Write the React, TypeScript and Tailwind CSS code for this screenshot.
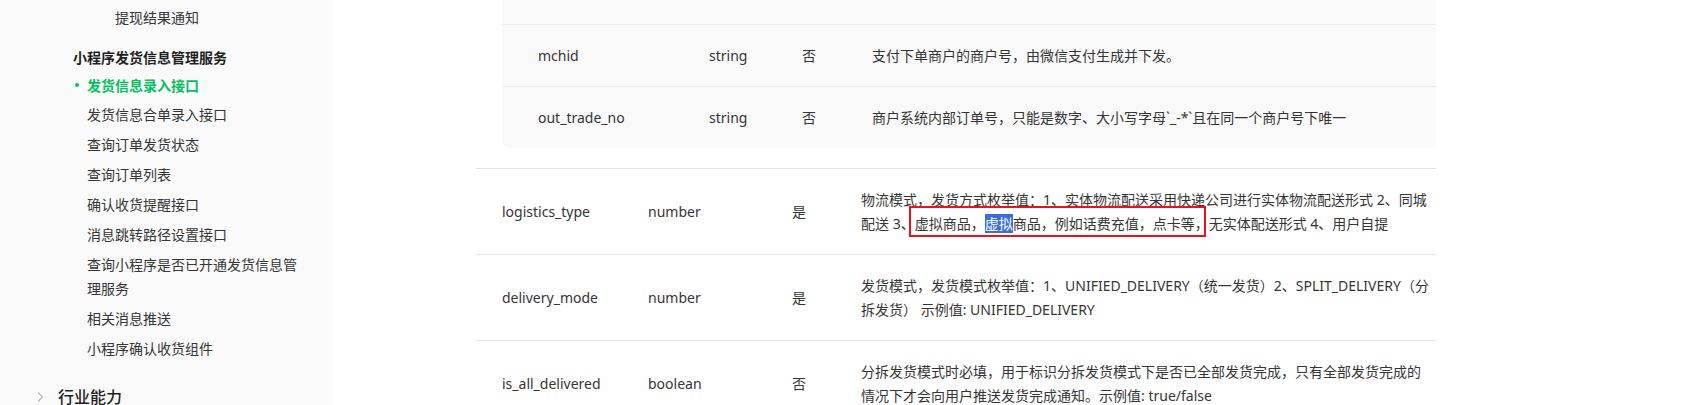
import React from "react";

const font = {
  fontFamily: '"Noto Sans", "Noto Sans CJK SC", sans-serif',
};

function SideItem({ children, indent = 87 }: { children: React.ReactNode; indent?: number }) {
  return (
    <div className="flex h-[30px] items-center text-[14px] leading-[24px] text-[#353535]" style={{ paddingLeft: indent }}>
      {children}
    </div>
  );
}

function Sidebar() {
  return (
    <aside className="w-[333px] shrink-0 bg-[#fafafa] pt-[2px]">
      <div className="flex h-[30px] items-center pl-[115px] text-[14px] text-[#353535]">提现结果通知</div>
      <div className="mt-[12px] flex h-[26px] items-center pl-[73px] text-[14px] font-bold text-[#1f1f1f]">
        小程序发货信息管理服务
      </div>
      <div className="relative flex h-[30px] items-center pl-[87px] text-[14px] font-bold text-[#07c160]">
        <span className="absolute left-[75px] top-[13px] h-[4px] w-[4px] rounded-full bg-[#07c160]" />
        发货信息录入接口
      </div>
      <SideItem>发货信息合单录入接口</SideItem>
      <SideItem>查询订单发货状态</SideItem>
      <SideItem>查询订单列表</SideItem>
      <SideItem>确认收货提醒接口</SideItem>
      <SideItem>消息跳转路径设置接口</SideItem>
      <div className="py-[3px] pl-[87px] text-[14px] leading-[24px] text-[#353535]">
        <div className="w-[215px]">查询小程序是否已开通发货信息管理服务</div>
      </div>
      <SideItem>相关消息推送</SideItem>
      <SideItem>小程序确认收货组件</SideItem>
      <div className="mt-[18px] flex h-[30px] items-center pl-[36px]">
        <svg width="8" height="12" viewBox="0 0 8 12" className="mr-[14px]">
          <path d="M2 1.5 L6.5 6 L2 10.5" fill="none" stroke="#b8b8b8" strokeWidth="1.2" />
        </svg>
        <span className="text-[16px] font-medium text-[#1f1f1f]">行业能力</span>
      </div>
    </aside>
  );
}

function NestedRow({ name, type, req, desc }: { name: string; type: string; req: string; desc: string }) {
  return (
    <div className="flex h-[62px] items-center border-t border-[#ededed] pl-[36px] text-[14px] text-[#353535]">
      <div className="w-[171px]">{name}</div>
      <div className="w-[93px]">{type}</div>
      <div className="w-[70px]">{req}</div>
      <div className="whitespace-nowrap">{desc}</div>
    </div>
  );
}

function OuterRow({
  name,
  type,
  req,
  children,
}: {
  name: string;
  type: string;
  req: string;
  children: React.ReactNode;
}) {
  return (
    <div className="flex h-[86px] items-center border-b border-[#e5e5e5] pl-[26px] text-[14px] leading-[24px] text-[#353535]">
      <div className="w-[146px]">{name}</div>
      <div className="w-[144px]">{type}</div>
      <div className="w-[69px]">{req}</div>
      <div className="whitespace-nowrap">{children}</div>
    </div>
  );
}

export default function App() {
  return (
    <div className="flex h-[405px] w-[1705px] overflow-hidden bg-white" style={font}>
      <Sidebar />
      <main className="flex-1 pl-[143px]">
        <div className="w-[960px]">
          <div className="border-b border-[#e5e5e5] pb-[20px] pl-[26px]">
            <div className="rounded-b-[8px] bg-[#f9f9f9]">
              <div className="h-[24px]" />
              <NestedRow name="mchid" type="string" req="否" desc="支付下单商户的商户号，由微信支付生成并下发。" />
              <NestedRow
                name="out_trade_no"
                type="string"
                req="否"
                desc="商户系统内部订单号，只能是数字、大小写字母`_-*`且在同一个商户号下唯一"
              />
            </div>
          </div>
          <OuterRow name="logistics_type" type="number" req="是">
            <div>物流模式，发货方式枚举值：1、实体物流配送采用快递公司进行实体物流配送形式 2、同城</div>
            <div>
              配送 3、
              <span className="relative">
                <span className="pointer-events-none absolute -left-[6px] right-[3px] -top-[8px] -bottom-[4px] border-2 border-[#e8141c]" />
                虚拟商品，<span className="bg-[#3a6fd6] text-white">虚拟</span>商品，例如话费充值，点卡等，
              </span>
              无实体配送形式 4、用户自提
            </div>
          </OuterRow>
          <OuterRow name="delivery_mode" type="number" req="是">
            <div>发货模式，发货模式枚举值：1、UNIFIED_DELIVERY（统一发货）2、SPLIT_DELIVERY（分</div>
            <div>拆发货） 示例值: UNIFIED_DELIVERY</div>
          </OuterRow>
          <OuterRow name="is_all_delivered" type="boolean" req="否">
            <div>分拆发货模式时必填，用于标识分拆发货模式下是否已全部发货完成，只有全部发货完成的</div>
            <div>情况下才会向用户推送发货完成通知。示例值: true/false</div>
          </OuterRow>
        </div>
      </main>
    </div>
  );
}
